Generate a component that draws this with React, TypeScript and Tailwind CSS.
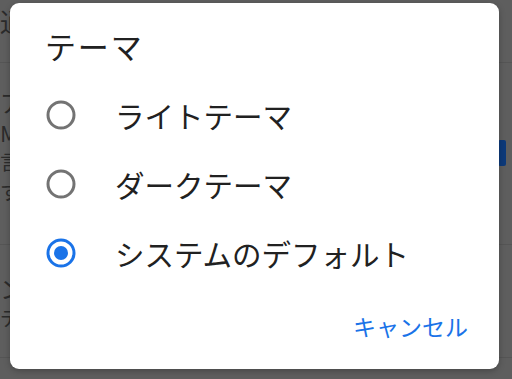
import React from "react";

const font = { fontFamily: '"Noto Sans CJK JP", "Noto Sans", sans-serif' };

function Radio({ checked }: { checked?: boolean }) {
  return (
    <svg width="30" height="30" viewBox="0 0 30 30" className="shrink-0">
      <circle
        cx="15"
        cy="15"
        r="13"
        fill="none"
        stroke={checked ? "#1a73e8" : "#737373"}
        strokeWidth="3"
      />
      {checked && <circle cx="15" cy="15" r="7" fill="#1a73e8" />}
    </svg>
  );
}

export default function App() {
  const options = [
    { label: "ライトテーマ", checked: false },
    { label: "ダークテーマ", checked: false },
    { label: "システムのデフォルト", checked: true },
  ];
  return (
    <div
      className="relative w-[512px] h-[379px] overflow-hidden bg-[#5e5e5e] text-[#2b2b2b]"
      style={font}
    >
      {/* dimmed background page */}
      <div className="flex flex-col">
        <div className="h-[63px] border-b border-[#555] pl-0 pt-[6px] text-[26px] leading-[30px]">
          通知
        </div>
        <div className="h-[182px] border-b border-[#555] pt-[24px] text-[24px] leading-[30px] flex flex-col">
          <span>アプリ</span>
          <span className="text-[22px]">Material</span>
          <span className="text-[20px] leading-[30px]">言語</span>
          <span className="text-[20px] leading-[30px]">すべて</span>
        </div>
        <div className="h-[113px] border-b border-[#555] pt-[28px] text-[24px] leading-[30px] flex flex-col">
          <span>ン</span>
          <span className="text-[20px]">デ</span>
        </div>
      </div>
      <div className="absolute right-[6px] top-[140px] w-[8px] h-[26px] rounded-[2px] bg-[#0d3a7a]" />

      {/* dialog */}
      <div className="absolute left-[10px] top-[3px] w-[489px] h-[366px] rounded-[9px] bg-white shadow-[0_2px_6px_rgba(0,0,0,0.25)] flex flex-col">
        <div className="pl-[35px] pt-[23px] text-[31px] leading-[40px] tracking-[0.06em] text-[#212121]">
          テーマ
        </div>
        <div className="flex flex-col mt-[14px]">
          {options.map((o) => (
            <div key={o.label} className="h-[69px] flex items-center pl-[36px] gap-[39px]">
              <Radio checked={o.checked} />
              <span className="text-[29.5px] leading-[40px] text-[#212121]">{o.label}</span>
            </div>
          ))}
        </div>
        <div className="flex justify-end pr-[31px] mt-[24px]">
          <span className="text-[23px] leading-[30px] text-[#1a73e8]">キャンセル</span>
        </div>
      </div>
    </div>
  );
}
